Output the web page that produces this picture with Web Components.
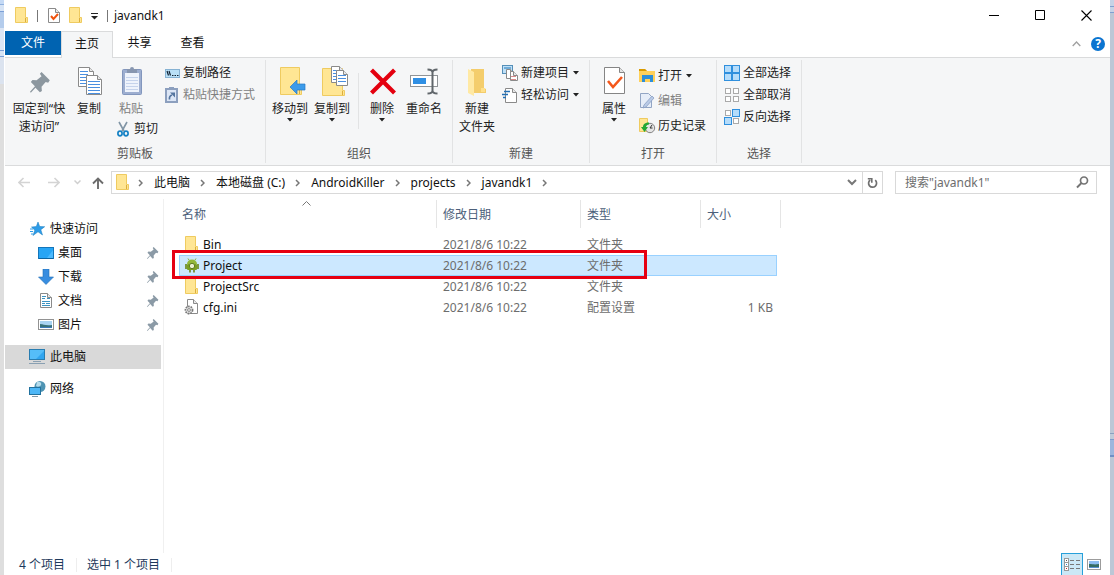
<!DOCTYPE html>
<html lang="zh-CN">
<head>
<meta charset="utf-8">
<title>javandk1</title>
<style>
html,body{height:100%;margin:0}
body{
  font:12px/18px "Noto Sans","Noto Sans CJK SC",sans-serif;color:#111;overflow:hidden;
  background:linear-gradient(#c5daf5 0 4px,#8fb1df 4px 5px,#d7e4f5 5px 11px,#7b9fd6 11px 12px,#b4ccec 12px 28px,#dce6f5 28px 50px,#7b9fd6 50px 51px,#d7e4f5 51px 56px,#7b9fd6 56px 57px,#dbe3ef 57px 84px,#dedede 84px) left/4px 100% no-repeat,
  linear-gradient(#c6d3e6 0 6px,#7f9fd0 6px 7px,#c6d3e6 7px 12px,#7f9fd0 12px 13px,#bcc7d6 13px 433px,#8aa0c0 433px 434px,#c0cbd9 434px 439px,#7f9ccb 439px 440px,#9db6dd 440px 455px,#6f8fc6 455px 457px,#bcc7d6 457px) right/4px 100% no-repeat,#fff;
}
</style>
</head>
<body>
<explorer-window></explorer-window>
<script>
const folder = (x,y,w,h) => `<path d="M${x+.5} ${y+.5}h${w-3}v${h-6}h2v5h-${w-1}z" fill="#ffe694" stroke="#efcb60"/><path d="M${x+w-2.5} ${y+h-5}v4" stroke="#dcae3c"/>`;
const page = (x,y,w,h,s='#8a8a8a') => `<path d="M${x+.5} ${y+.5}h${w-5}l4 4v${h-5}h-${w-1}z" fill="#fff" stroke="${s}"/><path d="M${x+w-4.5} ${y+.5}v4h4" fill="#e8e8e8" stroke="${s}"/>`;
const lines = (x,y,w,n,c='#4a8fe0') => Array.from({length:n},(_,i)=>`<path d="M${x} ${y+i*3+.5}h${w}" stroke="${c}"/>`).join('');
const PINPATH = 'M7 0l5 5-1 1.500-1.500-.5-2.500 3 .2 2.500-1.200.8-2.700-2.800L.5 12.500 0 12l3-3.300L.5 6l1-1.200 2.500.2 3-2.500L6 1z';
const sq = (x,y,on,s=7) => `<rect x="${x+.5}" y="${y+.5}" width="${s-1}" height="${s-1}" fill="${on?'#b5dcfa':'#fff'}" stroke="${on?'#2f8fdd':'#aaa'}"/>`;
const ICONS = {
  folder:[14,17,folder(0,0,13,16)],
  check:[13,16,page(0,0,12,15)+'<path d="M3 8l2.500 3L10 6" fill="none" stroke="#f0530e" stroke-width="2"/>'],
  dropbar:[8,8,'<path d="M0 1.500h7" stroke="#222"/><path d="M0 4h7L3.500 7.500z" fill="#222"/>'],
  down:[7,4,'<path d="M0 0h6L3 3.500z" fill="#222"/>'],
  min:[11,11,'<path d="M0 5.500h10" stroke="#000"/>'],
  max:[11,11,'<path d="M.5.5h9v9h-9z" fill="none" stroke="#000"/>'],
  close:[11,11,'<path d="M.5.5l10 10M10.500.5l-10 10" stroke="#000" stroke-width="1.100"/>'],
  up:[9,6,'<path d="M.7 5l3.800-4 3.800 4" fill="none" stroke="#a0a0a0" stroke-width="1.300"/>'],
  pin:[24,24,`<g transform="translate(3 2) scale(1.650)"><path d="${PINPATH}" fill="#8c979f"/></g>`],
  pins:[12,13,`<g transform="scale(.95)"><path d="${PINPATH}" fill="#8b9aa6"/></g>`],
  copy:[26,30,page(2,0,16,20)+lines(4,4,8,5)+page(10,8,16,20)+lines(12,14,12,5)],
  paste:[24,30,'<rect x="3.500" y="2.500" width="19" height="25" rx="1" fill="#9daed0" stroke="#8296bd"/><path d="M6 6h14v19H6z" fill="#eef3fc"/><path d="M8 2h3a2 2 0 0 1 4 0h3v4H8z" fill="#8796b0"/>'+lines(7,10,12,5,'#c5d3ec')],
  cut:[12,16,'<path d="M2 1l5 9M10 1L5 10" stroke="#8195a5" stroke-width="1.600"/><ellipse cx="3" cy="12.500" rx="2.100" ry="2.300" fill="none" stroke="#1682c5" stroke-width="1.700"/><ellipse cx="9" cy="12.500" rx="2.100" ry="2.300" fill="none" stroke="#1682c5" stroke-width="1.700"/>'],
  path:[15,9,'<rect x=".5" y=".5" width="14" height="8" fill="#b9e0f7" stroke="#86b2d3"/><path d="M2 2l1.500 4.500M4 2l1.500 4.500" stroke="#123" stroke-width="1.200"/><path d="M7 6.500h1.500m1 0H11m1 0h1.500" stroke="#123"/>'],
  shortcut:[14,16,'<rect x="1" y="2" width="11" height="13" fill="#dce6f6" stroke="#8c9fbe" stroke-width="2"/><path d="M4 0h5v3H4z" fill="#8c9fbe"/><path d="M4.500 12.500Q4 9 7 8" fill="none" stroke="#54759f" stroke-width="1.700"/><path d="M5 5.500h5v5z" fill="#54759f"/>'],
  moveto:[32,30,'<g transform="translate(5 -1)">'+folder(1,1,22,28)+'<path d="M11 21l7-7v4h8v6h-8v4z" fill="#3c9bea" stroke="#257ac5" stroke-width=".7"/></g>'],
  copyto:[32,32,'<g transform="translate(5 -1)">'+folder(1,3,23,28)+page(10,1,13,17)+lines(12,5,6,4)+page(15,5,12,16)+lines(17,10,8,3)+'</g>'],
  delete:[28,28,'<path d="M3.500 2l23 23M26.500 2l-23 23" stroke="#e4000f" stroke-width="4.200"/>'],
  rename:[30,28,'<g transform="translate(1 0)"><rect x=".5" y="7.500" width="27" height="11" fill="#fff" stroke="#909497"/><rect x="3" y="10" width="13" height="6" fill="#2f8fe4"/><path d="M17.500 1.500q5 0 5 3v18q0 3-5 3M27.500 1.500q-5 0-5 3v18q0 3 5 3" fill="none" stroke="#60666b" stroke-width="2"/></g>'],
  newfolder:[20,30,'<path d="M4 2h13v19l2 1v4H4z" fill="#f4cd6c"/><path d="M1 2l6 3v24l-6-3z" fill="#ffe9a4"/><path d="M14 21h4v4h-4z" fill="#ffe08a"/>'],
  newitem:[16,17,'<rect x=".5" y=".5" width="10" height="8" fill="#bfe0f7" stroke="#558fb8"/><path d="M2 3h7" stroke="#1f77b8"/>'+page(4,4,9,10)+page(8,6,8,10)+lines(9,11,5,2,'#d98b8b')],
  easy:[16,17,page(3,1,12,15)+'<path d="M2 4.500h6M0 7.500h6M1 10.500h3" stroke="#236fb5" stroke-width="1.300"/>'],
  props:[24,30,'<g transform="translate(2 -1)"><path d="M.5 1.500h15l5 5v21H.5z" fill="#fff" stroke="#858585"/><path d="M15.500 1.500v5h5" fill="#e4e4e4" stroke="#858585"/><path d="M4 15l5 6 9-10" fill="none" stroke="#f4581c" stroke-width="2.600"/></g>'],
  open:[17,15,'<path d="M0 1h6l2 2h8v11H0z" fill="#ffd15a"/><path d="M0 1h6l2 2H0z" fill="#d99a00"/><path d="M3 14V7h11v7h-3v-3H6v3z" fill="#2e8fd8"/>'],
  edit:[16,17,'<path d="M1.500 1.500h8l3 3v11h-11z" fill="#e6edf8" stroke="#92a5c4"/><path d="M5 13l8-9 2 2-8 9-3 1z" fill="#b9cae6" stroke="#8aa0c4" stroke-width=".8"/>'],
  history:[17,17,folder(0,1,11,14)+'<circle cx="11" cy="11" r="4.700" fill="#e5e5e5" stroke="#828282"/><path d="M11 11l2-3M11 11h2.500" fill="none" stroke="#333"/><path d="M10 5.500C5 5.500 4 8 4 10H2l3.500 5L9 10H7c0-1.500 1-2.500 3-2.500z" fill="#24a834"/>'],
  all:[16,16,sq(0,0,1,8)+sq(8,0,1,8)+sq(0,8,1,8)+sq(8,8,1,8)],
  none:[16,16,sq(1,1,0,6)+sq(9,1,0,6)+sq(1,9,0,6)+sq(9,9,0,6)],
  invert:[16,16,sq(1,1,0,6)+sq(8,0,1,8)+sq(0,8,1,8)+sq(9,9,0,6)],
  back:[12,11,'<path d="M12 5.500H1M5.500 1L1 5.500 5.500 10" fill="none" stroke="#d4d4d4" stroke-width="1.600"/>'],
  fwd:[12,11,'<path d="M0 5.500h11M6.500 1L11 5.500 6.500 10" fill="none" stroke="#d4d4d4" stroke-width="1.600"/>'],
  recent:[7,5,'<path d="M.5.5l3 3 3-3" fill="none" stroke="#cfcfcf" stroke-width="1.500"/>'],
  upward:[12,12,'<path d="M6 12V1M1 6.500L6 1.500l5 5" fill="none" stroke="#6c6c6c" stroke-width="1.900"/>'],
  crumb:[5,8,'<path d="M1 1l3 3-3 3" fill="none" stroke="#777" stroke-width="1.500"/>'],
  chev:[10,7,'<path d="M1 1l4 4 4-4" fill="none" stroke="#777" stroke-width="2"/>'],
  refresh:[11,12,'<path d="M8.200 3.200A4 4 0 1 1 3.200 3" fill="none" stroke="#707070" stroke-width="1.700"/><path d="M.8 1.800h4v4" fill="none" stroke="#707070" stroke-width="1.600"/>'],
  search:[13,13,'<circle cx="8" cy="4.500" r="3.500" fill="none" stroke="#747474" stroke-width="1.700"/><path d="M5.500 7L1 11.500" stroke="#747474" stroke-width="2"/>'],
  star:[15,14,'<path d="M8 0l1.700 4.500 5 .2-3.900 3L12.500 13 8 9.800 3 13.500l1.800-5.300L1.500 5l4.800-.4z" fill="#2d9ce8" stroke="#1378bd" stroke-width=".5"/><path d="M0 7h3M0 9.500h3M1 12h2" stroke="#2d9ce8"/>'],
  desktop:[16,13,'<rect x=".5" y=".5" width="15" height="11" fill="#27a5f5" stroke="#1476bb"/><path d="M9 11L15 3v8z" fill="#4bbaff"/><path d="M1 11.500h14" stroke="#0d639f"/>'],
  download:[16,16,'<path d="M5 0h6v8h4.500L8 15.500.5 8H5z" fill="#378de0" stroke="#216eb6" stroke-width=".6"/>'],
  docs:[14,16,page(1,0,12,15)+'<path d="M3 3.500h4M3 5.500h3M8 5.500h3M3 8.500h8M3 10.500h3M7 10.500h4M3 12.500h8" stroke="#3c93c2"/>'],
  pics:[16,12,'<rect x=".5" y=".5" width="15" height="10" fill="#fff" stroke="#929292"/><path d="M2 2h12v7H2z" fill="#a9d3f2"/><path d="M2 5c4 0 5 2 12 1v3H2z" fill="#397179"/><path d="M2 8h12v1H2z" fill="#3a78b8"/>'],
  pc:[17,16,'<rect x=".5" y=".5" width="15" height="10" fill="#55bdf8" stroke="#287db1"/><path d="M7 10l8-8v8z" fill="#31a5ef"/><path d="M4 12.500h8M0 14.500h16" stroke="#8aa0b2"/>'],
  net:[17,16,'<circle cx="11" cy="5.500" r="5.500" fill="#4f94b3"/><path d="M8 1c3-1 5 1 4 3s-4 2-5 1z" fill="#b5dcec"/><rect x=".5" y="6.500" width="11" height="7" fill="#4db7f7" stroke="#22729f"/><path d="M3 15.500h6" stroke="#8299a8"/>'],
  android:[14,15,'<path d="M2 6a5 4.500 0 0 1 10 0z" fill="#92b83b"/><path d="M4 2L3 .5M10 2l1-1.500" stroke="#8aae3a"/><rect x="2" y="6" width="10" height="6" rx="1" fill="#7ba023"/><path d="M1 6v5M13 6v5M5 12v2.500M9 12v2.500" stroke="#738f31" stroke-width="1.800"/><circle cx="7" cy="8" r="2.700" fill="#e9f0d1" stroke="#5d7b22"/>'],
  ini:[15,17,page(3,0,11,15)+'<circle cx="5" cy="11" r="3.600" fill="#ddd" stroke="#777" stroke-width="1.600" stroke-dasharray="1.600 1"/><circle cx="5" cy="11" r="1.400" fill="#fff" stroke="#888"/>'],
  sort:[9,5,'<path d="M.5 4.500l4-4 4 4" fill="none" stroke="#777"/>'],
  details:[17,15,[0,4,8].map((y,i)=>`<rect x=".5" y="${y+1.500}" width="4" height="4" fill="#fff" stroke="#999"/><rect x="2" y="${y+3}" width="1" height="1" fill="${['#555','#2b8bd0','#c22'][i]}"/><path d="M6 ${y+3.500}h4m2 0h4" stroke="#777"/>`).join('')],
  thumbs:[14,11,'<rect x=".5" y=".5" width="13" height="10" fill="#fff" stroke="#9c9c9c"/><path d="M2 2h10v7H2z" fill="#8dbdf0"/><path d="M2 5c4 0 5 1 10 0v4H2z" fill="#376d63"/><path d="M2 8h10v1H2z" fill="#5a90cf"/>']
};

function define(name, css, html, setup){
  const t = document.createElement('template');
  t.innerHTML = `<style>*{box-sizing:border-box}button{font:inherit;color:inherit;background:none;border:0;padding:0;margin:0}${css}</style>${html}`;
  customElements.define(name, class extends HTMLElement{
    constructor(){
      super();
      this.attachShadow({mode:'open'}).append(t.content.cloneNode(true));
    }
    connectedCallback(){ if(setup) setup(this, this.shadowRoot); }
  });
}

define('ui-icon', ':host{display:inline-flex;flex:none}svg{display:block}', '', (el, root) => {
  if(root.querySelector('svg')) return;
  const [w,h,body] = ICONS[el.getAttribute('name')];
  const t = document.createElement('template');
  t.innerHTML = `<svg width="${w}" height="${h}" viewBox="0 0 ${w} ${h}" aria-hidden="true">${body}</svg>`;
  root.append(t.content);
});

define('title-bar',
  `:host{display:flex;height:31px;align-items:center;padding-left:10px}
  .quick{display:flex;align-items:center;gap:8px}.quick button{display:flex}
  .sep{width:1px;height:12px;background:#777}.lead{margin-right:2px}
  h1{font:inherit;margin:0 0 0 6px;flex:1}
  .win{display:flex;padding-right:1px}.win button{width:46px;height:31px;display:grid;place-items:center}`,
  `<div class="quick"><ui-icon name="folder"></ui-icon><i class="sep lead"></i>
  <button aria-label="属性"><ui-icon name="check"></ui-icon></button>
  <button aria-label="新建文件夹"><ui-icon name="folder"></ui-icon></button>
  <button aria-label="自定义"><ui-icon name="dropbar"></ui-icon></button><i class="sep"></i></div>
  <h1>javandk1</h1>
  <div class="win"><button aria-label="最小化"><ui-icon name="min"></ui-icon></button><button aria-label="最大化"><ui-icon name="max"></ui-icon></button><button aria-label="关闭"><ui-icon name="close"></ui-icon></button></div>`);

define('ribbon-tabs',
  `:host{display:flex;height:27px;border-bottom:1px solid #dadbdc}
  button{width:53px;height:24px}.file{width:56px;background:#0063b1;color:#fff}
  .on{width:52px;height:27px;padding-bottom:3px;background:#f5f6f7;border:1px solid #dadbdc;border-bottom:0}
  .end{margin-left:auto;display:flex;align-items:center;gap:10px;padding-right:5px}
  .end button{width:auto;height:auto;display:flex}
  .end .help{width:14px;height:14px;border-radius:50%;background:#0a74d0;justify-content:center;align-items:center;color:#fff;font-weight:700;line-height:14px}`,
  `<button class="file">文件</button><button class="on">主页</button><button>共享</button><button>查看</button>
  <div class="end"><button aria-label="折叠"><ui-icon name="up"></ui-icon></button><button class="help">?</button></div>`);

define('ribbon-group',
  `:host{display:flex;flex-direction:column;border-right:1px solid #e2e3e4;padding-top:2px;color:#222;flex:none}
  .body{display:flex;height:83px}.label{text-align:center;color:#555;line-height:18px}`,
  `<div class="body"><slot></slot></div><div class="label"></div>`,
  (el, root) => { root.querySelector('.label').textContent = el.getAttribute('label'); });

define('ribbon-big',
  `:host{display:block;width:42px;flex:none}
  :host([wide]){width:58px}:host([off]){color:#808080}
  button{width:100%;display:flex;flex-direction:column;align-items:center;padding-top:4px}
  .pic{height:32px;display:grid;place-items:center;margin-bottom:2px}
  .txt{white-space:nowrap;line-height:18px}
  .arrow{display:none;height:4px}:host([menu]) .arrow{display:flex}`,
  `<button><span class="pic"><slot name="icon"></slot></span><span class="txt"><slot></slot></span><span class="arrow"><ui-icon name="down"></ui-icon></span></button>`);

define('ribbon-small',
  `:host{display:block}:host([off]){color:#808080}
  button{display:flex;align-items:center;height:var(--row,22px);gap:3px;white-space:nowrap}
  .pic{width:16px;display:grid;place-items:center}
  .arrow{display:none;margin-left:1px}:host([menu]) .arrow{display:flex}`,
  `<button><span class="pic"><slot name="icon"></slot></span><span><slot></slot></span><span class="arrow"><ui-icon name="down"></ui-icon></span></button>`);

define('ribbon-bar',
  `:host{display:flex;background:#f5f6f7;border-bottom:1px solid #dadbdc;padding:2px 0}
  .clip{width:261px}.org{width:187px}.new{width:137px}.open{width:127px}.sel{width:85px}
  .first{padding-left:5px}.pad{padding-left:3px}.row{display:flex}
  .pastecol{width:54px}.cut{padding-left:5px}
  .tall{--row:25px;padding:1px 0 0 4px}.col{padding-left:4px}.selcol{padding-left:7px}
  .rule{width:1px;height:56px;background:#e2e3e4;margin:11px 2px 0 5px}`,
  `<ribbon-group class="clip" label="剪贴板"><div class="row first">
    <ribbon-big wide><ui-icon slot="icon" name="pin"></ui-icon>固定到“快<br>速访问”</ribbon-big>
    <ribbon-big><ui-icon slot="icon" name="copy"></ui-icon>复制</ribbon-big>
    <div class="pastecol"><ribbon-big off><ui-icon slot="icon" name="paste"></ui-icon>粘贴</ribbon-big>
      <ribbon-small class="cut"><ui-icon slot="icon" name="cut"></ui-icon>剪切</ribbon-small></div>
    <div><ribbon-small><ui-icon slot="icon" name="path"></ui-icon>复制路径</ribbon-small>
      <ribbon-small off><ui-icon slot="icon" name="shortcut"></ui-icon>粘贴快捷方式</ribbon-small></div>
  </div></ribbon-group>
  <ribbon-group class="org" label="组织"><div class="row pad">
    <ribbon-big menu><ui-icon slot="icon" name="moveto"></ui-icon>移动到</ribbon-big>
    <ribbon-big menu><ui-icon slot="icon" name="copyto"></ui-icon>复制到</ribbon-big>
    <i class="rule"></i>
    <ribbon-big menu><ui-icon slot="icon" name="delete"></ui-icon>删除</ribbon-big>
    <ribbon-big><ui-icon slot="icon" name="rename"></ui-icon>重命名</ribbon-big>
  </div></ribbon-group>
  <ribbon-group class="new" label="新建"><div class="row pad">
    <ribbon-big><ui-icon slot="icon" name="newfolder"></ui-icon>新建<br>文件夹</ribbon-big>
    <div class="col"><ribbon-small menu><ui-icon slot="icon" name="newitem"></ui-icon>新建项目</ribbon-small>
      <ribbon-small menu><ui-icon slot="icon" name="easy"></ui-icon>轻松访问</ribbon-small></div>
  </div></ribbon-group>
  <ribbon-group class="open" label="打开"><div class="row pad">
    <ribbon-big menu><ui-icon slot="icon" name="props"></ui-icon>属性</ribbon-big>
    <div class="tall"><ribbon-small menu><ui-icon slot="icon" name="open"></ui-icon>打开</ribbon-small>
      <ribbon-small off><ui-icon slot="icon" name="edit"></ui-icon>编辑</ribbon-small>
      <ribbon-small><ui-icon slot="icon" name="history"></ui-icon>历史记录</ribbon-small></div>
  </div></ribbon-group>
  <ribbon-group class="sel" label="选择"><div class="selcol">
    <ribbon-small><ui-icon slot="icon" name="all"></ui-icon>全部选择</ribbon-small>
    <ribbon-small><ui-icon slot="icon" name="none"></ui-icon>全部取消</ribbon-small>
    <ribbon-small><ui-icon slot="icon" name="invert"></ui-icon>反向选择</ribbon-small>
  </div></ribbon-group>`);

define('address-bar',
  `:host{display:flex;align-items:center;height:33px;padding-right:13px}
  .nav{display:flex;width:106px;height:23px;padding-left:4px}
  .nav button{width:30px;display:grid;place-items:center}.nav .thin{width:16px}.nav .up{width:26px}
  nav,.search{display:flex;align-items:center;height:23px;border:1px solid #d9d9d9}
  nav{flex:1;min-width:0;padding-left:4px;margin-right:12px}
  nav ui-icon{margin:0 11px 0 10px}nav .root{margin:0}.root + ui-icon{margin-left:8px}
  a{color:inherit;text-decoration:none;white-space:nowrap}
  nav button{width:20px;height:21px;display:grid;place-items:center}
  nav button ui-icon{margin:0}.drop{margin-left:auto}nav .refresh{border-left:1px solid #d9d9d9}
  .search{width:202px;padding:0 7px 0 9px}
  input{flex:1;min-width:0;border:0;padding:0;outline:0;font:inherit;color:#6d6d6d;background:none}input::placeholder{color:#6d6d6d;opacity:1}`,
  `<div class="nav"><button aria-label="后退"><ui-icon name="back"></ui-icon></button><button aria-label="前进"><ui-icon name="fwd"></ui-icon></button><button class="thin" aria-label="最近"><ui-icon name="recent"></ui-icon></button><button class="up" aria-label="向上"><ui-icon name="upward"></ui-icon></button></div>
  <nav><ui-icon class="root" name="folder"></ui-icon><ui-icon name="crumb"></ui-icon><a href="#">此电脑</a><ui-icon name="crumb"></ui-icon><a href="#">本地磁盘 (C:)</a><ui-icon name="crumb"></ui-icon><a href="#">AndroidKiller</a><ui-icon name="crumb"></ui-icon><a href="#">projects</a><ui-icon name="crumb"></ui-icon><a href="#">javandk1</a><ui-icon name="crumb"></ui-icon>
  <button class="drop" aria-label="历史"><ui-icon name="chev"></ui-icon></button><button class="refresh" aria-label="刷新"><ui-icon name="refresh"></ui-icon></button></nav>
  <div class="search"><input type="text" aria-label="搜索" placeholder='搜索"javandk1"'><ui-icon name="search"></ui-icon></div>`);

define('nav-item',
  `:host{display:block;margin-right:2px}
  a{display:flex;align-items:center;height:24px;padding-left:24px;color:inherit;text-decoration:none}
  .pic{width:17px;display:grid;place-items:center;margin-right:4px}
  .pin{display:none;margin-left:auto;padding-right:2px}
  :host([child]) a{padding-left:32px}:host([child]) .pin{display:flex}
  :host([on]) a{background:#d9d9d9}`,
  `<a href="#"><span class="pic"><slot name="icon"></slot></span><slot></slot><span class="pin"><ui-icon name="pins"></ui-icon></span></a>`);

define('nav-pane',
  `:host{display:block;width:159px;flex:none;padding-top:18px;border-right:1px solid #f0f0f0}
  .gap{margin-top:8px}`,
  `<nav-item><ui-icon slot="icon" name="star"></ui-icon>快速访问</nav-item>
  <nav-item child><ui-icon slot="icon" name="desktop"></ui-icon>桌面</nav-item>
  <nav-item child><ui-icon slot="icon" name="download"></ui-icon>下载</nav-item>
  <nav-item child><ui-icon slot="icon" name="docs"></ui-icon>文档</nav-item>
  <nav-item child><ui-icon slot="icon" name="pics"></ui-icon>图片</nav-item>
  <nav-item class="gap" on><ui-icon slot="icon" name="pc"></ui-icon>此电脑</nav-item>
  <nav-item class="gap"><ui-icon slot="icon" name="net"></ui-icon>网络</nav-item>`);

const FILES = [
  ['folder','Bin','文件夹',''],['android','Project','文件夹',''],
  ['folder','ProjectSrc','文件夹',''],['ini','cfg.ini','配置设置','1 KB']
];
define('file-list',
  `:host{display:block;flex:1;min-width:0;padding:1px 0 0 15px}
  .wrap{position:relative;width:602px}
  table{width:100%;table-layout:fixed;border-collapse:separate;border-spacing:0}
  col.n{width:258px}col.d{width:144px}col.t{width:120px}
  th,td{padding:0;text-align:left;font-weight:400}
  th{height:28px;border-right:1px solid #e5e5e5;color:#4c607a;padding:2px 0 0 6px}
  th:first-child{padding-left:3px}
  thead::after{content:"";display:block;height:6px}
  td{color:#6d6d6d}td:last-child{padding-right:4px}
  .cell{height:21px;display:flex;align-items:center;padding-left:6px;border:0 solid #99d1ff}
  td:first-child .cell{color:#111;padding-left:5px;overflow:hidden}
  td:last-child .cell{justify-content:flex-end;padding-right:4px}
  .pic{width:15px;display:grid;justify-items:center;margin-right:4px}
  .on .cell{background:#cce8ff;border-width:1px 0}
  .on td:first-child .cell{border-left-width:1px;padding-left:4px}
  .on td:last-child .cell{border-right-width:1px}
  .sort{position:absolute;left:123px;top:1px;display:flex}
  .mark{position:absolute;left:-7px;top:50px;width:475px;height:29px;border:3px solid #e60012}`,
  `<div class="wrap"><table><colgroup><col class="n"><col class="d"><col class="t"><col></colgroup>
  <thead><tr><th>名称</th><th>修改日期</th><th>类型</th><th>大小</th></tr></thead>
  <tbody>${FILES.map(([i,n,t,s],k)=>`<tr${k===1?' class="on"':''}><td><div class="cell"><span class="pic"><ui-icon name="${i}"></ui-icon></span>${n}</div></td><td><div class="cell">2021/8/6 10:22</div></td><td><div class="cell">${t}</div></td><td><div class="cell">${s}</div></td></tr>`).join('')}</tbody></table>
  <ui-icon class="sort" name="sort"></ui-icon><div class="mark"></div></div>`);

define('status-bar',
  `:host{display:flex;height:22px;align-items:center;color:#1e395b;padding-left:14px}
  span{padding-right:11px;margin:2px 10px 0 0;border-right:1px solid #eee;line-height:14px}
  .views{margin-left:auto;display:flex;height:22px;padding-right:5px}
  .views button{width:22px;display:grid;place-items:center}
  .views .on{background:#cbe8f6;border:1px solid #26a0da;border-bottom:0}`,
  `<span>4 个项目</span><span>选中 1 个项目</span><div class="views"><button class="on" aria-label="详细信息"><ui-icon name="details"></ui-icon></button><button aria-label="大图标"><ui-icon name="thumbs"></ui-icon></button></div>`);

define('explorer-window',
  `:host{box-sizing:border-box;display:flex;flex-direction:column;height:100%;padding:0 4px 0 5px;background:linear-gradient(#fff,#fff) 4px 0/calc(100% - 8px) 100% no-repeat}
  main{display:flex;flex:1;min-height:0}`,
  `<title-bar></title-bar><ribbon-tabs></ribbon-tabs><ribbon-bar></ribbon-bar><address-bar></address-bar>
  <main><nav-pane></nav-pane><file-list></file-list></main><status-bar></status-bar>`);
</script>
</body>
</html>
